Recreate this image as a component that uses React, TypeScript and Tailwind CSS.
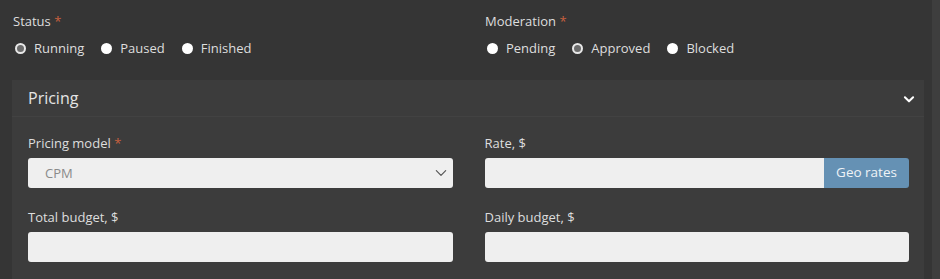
import { useState } from "react";

type Opt = { label: string; value: string };

const Radio: React.FC<{ checked: boolean; label: string; onClick: () => void }> = ({ checked, label, onClick }) => (
  <label className="flex items-center gap-[8px] cursor-pointer" onClick={onClick}>
    {checked ? (
      <span className="w-[11px] h-[11px] rounded-full border-[2px] border-[#e8e8e8] bg-[#6b6b6b]" />
    ) : (
      <span className="w-[11px] h-[11px] rounded-full bg-white" />
    )}
    <span>{label}</span>
  </label>
);

const RadioGroup: React.FC<{ title: string; options: Opt[]; value: string; onChange: (v: string) => void }> = ({
  title,
  options,
  value,
  onChange,
}) => (
  <div className="flex flex-col">
    <p className="h-[20px] leading-[20px]">
      {title} <span className="text-[#c8603f]">*</span>
    </p>
    <div className="flex gap-[17px] mt-[8px] pl-[2px]">
      {options.map((o) => (
        <Radio key={o.value} label={o.label} checked={value === o.value} onClick={() => onChange(o.value)} />
      ))}
    </div>
  </div>
);

const Field: React.FC<{ label: string; required?: boolean; children?: React.ReactNode }> = ({ label, required, children }) => (
  <div className="flex flex-col">
    <p className="h-[20px] leading-[20px]">
      {label} {required && <span className="text-[#c8603f]">*</span>}
    </p>
    <div className="mt-[5px]">
      {children ?? <input className="w-full h-[30px] rounded-[3px] bg-[#efefef] outline-none px-3 text-[#555]" />}
    </div>
  </div>
);

export default function App() {
  const [status, setStatus] = useState("running");
  const [moderation, setModeration] = useState("approved");
  const [open, setOpen] = useState(true);

  return (
    <div
      className="w-[940px] h-[279px] overflow-hidden bg-[#353535] text-[13px] text-[#dedede] flex"
      style={{ fontFamily: '"Open Sans", "Noto Sans", sans-serif' }}
    >
      <div className="flex-1 pl-[12px] pr-[8px]">
        <div className="grid grid-cols-[472px_1fr] pt-[11px] pl-[1px]">
          <RadioGroup
            title="Status"
            value={status}
            onChange={setStatus}
            options={[
              { label: "Running", value: "running" },
              { label: "Paused", value: "paused" },
              { label: "Finished", value: "finished" },
            ]}
          />
          <RadioGroup
            title="Moderation"
            value={moderation}
            onChange={setModeration}
            options={[
              { label: "Pending", value: "pending" },
              { label: "Approved", value: "approved" },
              { label: "Blocked", value: "blocked" },
            ]}
          />
        </div>

        <section className="mt-[21px] bg-[#3c3c3c] min-h-[200px]">
          <button
            className="w-full h-[37px] flex items-center justify-between pl-[16px] pr-[8px] border-b border-[#424242]"
            onClick={() => setOpen(!open)}
          >
            <span className="text-[16px] text-[#e4e4e4]">Pricing</span>
            <svg className="mt-[3px]" width="14" height="14" viewBox="0 0 24 24" fill="none" stroke="#fff" strokeWidth="3.5" strokeLinecap="round" strokeLinejoin="round">
              <path d="M5 9l7 7 7-7" />
            </svg>
          </button>
          {open && (
            <div className="grid grid-cols-2 gap-x-[32px] gap-y-[19px] pl-[16px] pr-[15px] pt-[16px]">
              <Field label="Pricing model" required>
                <div className="w-full h-[30px] rounded-[3px] bg-[#efefef] flex items-center justify-between pl-[17px] pr-[5px] text-[#8a8a8a]">
                  <span className="mt-[2px]">CPM</span>
                  <svg width="14" height="14" viewBox="0 0 24 24" fill="none" stroke="#555" strokeWidth="2" strokeLinecap="round" strokeLinejoin="round">
                    <path d="M4 8l8 8 8-8" />
                  </svg>
                </div>
              </Field>
              <Field label="Rate, $">
                <div className="flex h-[30px] rounded-[3px] overflow-hidden">
                  <input className="flex-1 min-w-0 bg-[#efefef] outline-none px-3 text-[#555]" />
                  <button className="w-[85px] bg-[#6591b4] text-[#eef3f7] text-[13.5px]">Geo rates</button>
                </div>
              </Field>
              <Field label="Total budget, $" />
              <Field label="Daily budget, $" />
            </div>
          )}
        </section>
      </div>
      <div className="w-[8px] bg-[#3e3e3e]" />
    </div>
  );
}
